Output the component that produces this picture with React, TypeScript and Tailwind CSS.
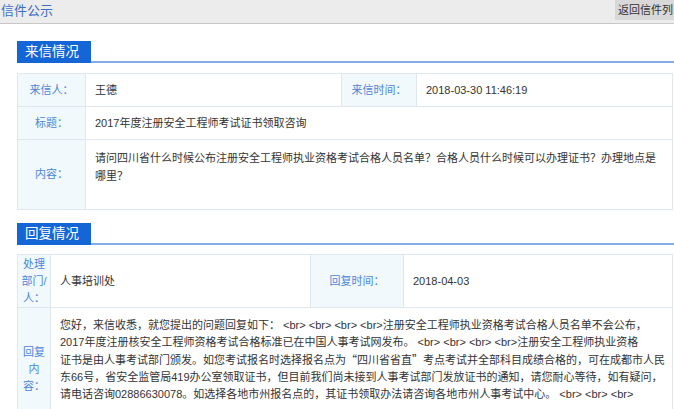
import type { ReactNode } from "react";

const border = "border-[#dfe8f0]";

function Label({ children, className = "" }: { children: ReactNode; className?: string }) {
  return (
    <div
      className={`flex items-center justify-center border-r border-b ${border} bg-[#f2f9fd] text-center text-[#4a86d9] ${className}`}
    >
      {children}
    </div>
  );
}

function Value({ children, className = "" }: { children: ReactNode; className?: string }) {
  return (
    <div className={`border-r border-b ${border} pl-[9px] text-[#333] ${className}`}>
      {children}
    </div>
  );
}

function SectionTitle({ title }: { title: string }) {
  return (
    <div className="ml-[17px] flex items-end">
      <div className="flex h-[22px] w-[74px] shrink-0 items-center bg-[#1466d6] pl-[8px] text-[13.5px] text-white">
        {title}
      </div>
      <div className="h-[2px] flex-1 bg-[#86ace6]" />
    </div>
  );
}

// full-width quotes come from the CJK font, as in the original page
const cjk = "font-[family-name:'Noto_Sans_CJK_SC',sans-serif]";

const replyLines: ReactNode[] = [
  "您好，来信收悉，就您提出的问题回复如下： <br> <br> <br> <br>注册安全工程师执业资格考试合格人员名单不会公布，",
  "2017年度注册核安全工程师资格考试合格标准已在中国人事考试网发布。 <br> <br> <br> <br>注册安全工程师执业资格",
  <>
    证书是由人事考试部门颁发。如您考试报名时选择报名点为<span className={cjk}>“</span>四川省省直
    <span className={cjk}>”</span>考点考试并全部科目成绩合格的，可在成都市人民
  </>,
  "东66号，省安全监管局419办公室领取证书，但目前我们尚未接到人事考试部门发放证书的通知，请您耐心等待，如有疑问，",
  "请电话咨询02886630078。如选择各地市州报名点的，其证书领取办法请咨询各地市州人事考试中心。 <br> <br> <br>",
];

export default function App() {
  return (
    <div className="min-h-screen w-[674px] overflow-hidden bg-white font-[family-name:'Liberation_Sans','Noto_Sans_CJK_SC',sans-serif] text-[11px]">
      {/* top bar */}
      <div className="flex h-[24px] items-start border-b border-[#c8c8c8] bg-[#ececec]">
        <div className="flex-1 pl-[1px] pt-[3px] text-[13px] leading-[16px] text-[#3c6fc4]">
          信件公示
        </div>
        <div className="h-[20px] w-[59px] shrink-0 whitespace-nowrap bg-[#d8d8d8] pl-[3px] text-[11px] leading-[20px] text-[#333]">
          返回信件列
        </div>
      </div>

      <div className="h-[17px]" />
      <SectionTitle title="来信情况" />

      <div
        className={`mt-[10px] ml-[17px] mr-[1px] grid grid-cols-[68px_256px_75px_1fr] border-l border-t ${border}`}
      >
        <Label className="h-[33px]">来信人：</Label>
        <Value className="flex items-center">王德</Value>
        <Label>来信时间：</Label>
        <Value className="flex items-center">2018-03-30 11:46:19</Value>

        <Label className="h-[33px]">标题：</Label>
        <Value className="col-span-3 flex items-center">2017年度注册安全工程师考试证书领取咨询</Value>

        <Label className="h-[70px]">内容：</Label>
        <Value className="col-span-3 pt-[9px] leading-[18px]">
          请问四川省什么时候公布注册安全工程师执业资格考试合格人员名单？合格人员什么时候可以办理证书？办理地点是
          <br />
          哪里？
        </Value>
      </div>

      <div className="h-[13px]" />
      <SectionTitle title="回复情况" />

      <div
        className={`mt-[9px] ml-[17px] mr-[1px] grid grid-cols-[33px_260px_93px_1fr] border-l border-t ${border}`}
      >
        <Label className="h-[53px] flex-col leading-[17px]">
          <span>处理</span>
          <span>部门/</span>
          <span>人：</span>
        </Label>
        <Value className="flex items-center">人事培训处</Value>
        <Label>回复时间：</Label>
        <Value className="flex items-center">2018-04-03</Value>

        <Label className="flex-col leading-[17px]">
          <span>回复</span>
          <span>内</span>
          <span>容：</span>
        </Label>
        <Value className="col-span-3 pt-[9px] pb-[28px] leading-[17px]">
          {replyLines.map((line, i) => (
            <div key={i} className="whitespace-nowrap">
              {line}
            </div>
          ))}
        </Value>
      </div>
    </div>
  );
}
